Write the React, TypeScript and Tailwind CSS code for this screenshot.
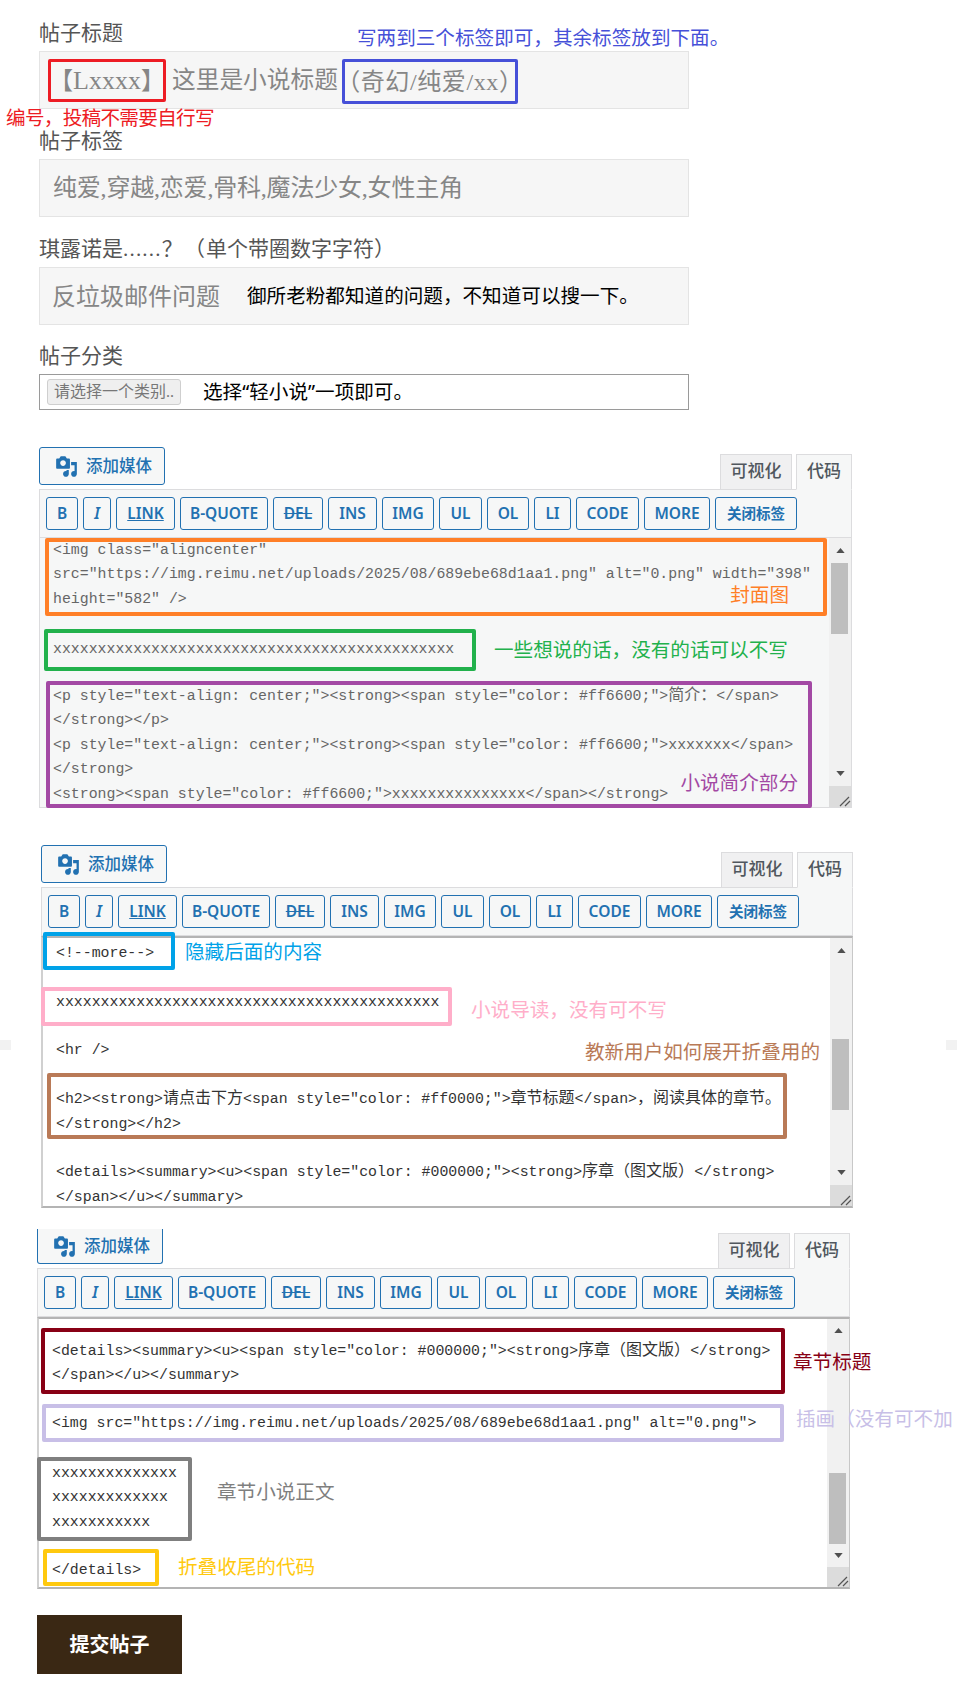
import React from 'react';

const serif = "font-['Liberation_Serif','Noto_Sans_CJK_SC',serif]";
const sans = "font-['Noto_Sans','Noto_Sans_CJK_SC',sans-serif]";

const toolbarButtons = [
  { label: 'B', cls: 'w-[32px] text-[15.5px]' },
  { label: 'I', cls: 'w-[28px] text-[15.5px] italic' },
  { label: 'LINK', cls: 'w-[59px] text-[15.5px] underline' },
  { label: 'B-QUOTE', cls: 'w-[88px] text-[15.5px]' },
  { label: 'DEL', cls: 'w-[50px] text-[15.5px] line-through' },
  { label: 'INS', cls: 'w-[49px] text-[15.5px]' },
  { label: 'IMG', cls: 'w-[52px] text-[15.5px]' },
  { label: 'UL', cls: 'w-[43px] text-[15.5px]' },
  { label: 'OL', cls: 'w-[42px] text-[15.5px]' },
  { label: 'LI', cls: 'w-[37px] text-[15.5px]' },
  { label: 'CODE', cls: 'w-[63px] text-[15.5px]' },
  { label: 'MORE', cls: 'w-[66px] text-[15.5px]' },
  { label: '关闭标签', cls: 'w-[82px] text-[14.5px]' },
];

// CJK runs sit a little larger than the monospace latin in the source
const Code = ({ text }: { text: string }) => (
  <div className="h-[24.4px] leading-[24.4px] whitespace-pre">
    {text.split(/([\u3000-\u9fff\uff00-\uffef]+)/).map((part, i) =>
      i % 2 === 1 ? (
        <span key={i} className="text-[16px]">{part}</span>
      ) : (
        part
      )
    )}
  </div>
);

const MediaIcon = () => (
  <svg viewBox="0 0 20 20" className="w-[23px] h-[23px] fill-[#2271b1]">
    <path
      fillRule="evenodd"
      d="M13 11V4c0-.55-.45-1-1-1h-1.67L9 1H5L3.67 3H2c-.55 0-1 .45-1 1v7c0 .55.45 1 1 1h10c.55 0 1-.45 1-1zM7 4.5c1.38 0 2.5 1.12 2.5 2.5S8.38 9.5 7 9.5 4.5 8.38 4.5 7 5.62 4.5 7 4.5zM14 6h5v10.5c0 1.38-1.12 2.5-2.5 2.5S14 17.88 14 16.5s1.12-2.5 2.5-2.5c.17 0 .34.02.5.05V9h-3V6zm-4 8.05V13h2v3.5c0 1.38-1.12 2.5-2.5 2.5S7 17.88 7 16.5 8.12 14 9.5 14c.17 0 .34.02.5.05z"
    />
  </svg>
);

const Scrollbar = ({ thumb }: { thumb: string }) => (
  <div className="w-[22px] shrink-0 flex flex-col bg-[#f1f1f1]">
    <div className="h-[25px] flex items-center justify-center">
      <svg viewBox="0 0 10 6" className="w-[9px] h-[5px] fill-[#505050]"><path d="M5 0l5 6H0z" /></svg>
    </div>
    <div className="flex-1 px-[2px]">
      <div className={`w-[17px] h-[71px] bg-[#bebebe] ${thumb}`} />
    </div>
    <div className="h-[25px] flex items-center justify-center">
      <svg viewBox="0 0 10 6" className="w-[9px] h-[5px] fill-[#505050]"><path d="M0 0h10L5 6z" /></svg>
    </div>
    <div className="h-[21px] bg-[#dcdcdc] flex items-end justify-end">
      <svg viewBox="0 0 12 12" className="w-[12px] h-[12px] stroke-[#555] stroke-[1.2]">
        <path d="M1 11L10 2M6 11l5-5" />
      </svg>
    </div>
  </div>
);

type EditorProps = {
  boxed?: boolean;
  clippedMedia?: boolean;
  className: string;
  bodyHeight: string;
  thumb: string;
  children: React.ReactNode;
};

const Editor = ({ boxed, clippedMedia, className, bodyHeight, thumb, children }: EditorProps) => (
  <section className={className}>
    <div className={`flex justify-between ${clippedMedia ? 'h-[39px] items-start' : 'h-[42px] items-end'}`}>
      <button
        className={`w-[126px] pl-[3px] flex items-center justify-center gap-[8px] border border-[#2271b1] bg-[#f6f7f7] text-[#2271b1] text-[16.5px] ${sans} ${
          clippedMedia ? 'h-[35px] border-t-0 rounded-b-[3px]' : 'h-[38px] mb-[4px] rounded-[3px]'
        }`}
      >
        <MediaIcon />
        <span className="font-medium">添加媒体</span>
      </button>
      <div className={`flex gap-[4px] self-end relative z-10 -mb-px ${sans} text-[17px] font-medium text-[#50575e]`}>
        <div className="w-[72px] h-[36px] pb-[2px] flex items-center justify-center bg-[#f0f0f1] border border-[#dcdcde]">可视化</div>
        <div className="w-[56px] h-[36px] pb-[2px] flex items-center justify-center bg-[#f6f7f7] border border-[#dcdcde] border-b-[#f6f7f7]">代码</div>
      </div>
    </div>
    <div className="h-[49px] bg-[#f6f7f7] border border-[#dcdcde] flex items-start gap-[5px] pl-[6px] pt-[7px]">
      {toolbarButtons.map((b) => (
        <button
          key={b.label}
          className={`h-[33px] shrink-0 border border-[#2271b1] rounded-[3px] bg-[#f6f7f7] text-[#2271b1] font-semibold ${sans} ${b.cls}`}
        >
          {b.label}
        </button>
      ))}
    </div>
    <div
      className={`flex ${bodyHeight} ${
        boxed
          ? 'bg-white border-y-2 border-l-2 border-r border-y-[#b4b4b4] border-l-[#d0d0d0] border-r-[#c8c8c8]'
          : 'bg-[#f6f7f7] border-x border-b border-[#dcdcde]'
      }`}
    >
      <div
        className={`flex-1 min-w-0 relative z-10 font-['Liberation_Mono','Noto_Sans_CJK_SC',monospace] text-[14.87px] ${
          boxed ? 'text-[#333]' : 'text-[#666]'
        }`}
      >
        {children}
      </div>
      <Scrollbar thumb={thumb} />
    </div>
  </section>
);

// 标注用的彩色方框
const Box = ({ className, children }: { className: string; children?: React.ReactNode }) => (
  <div className={`shrink-0 border-[4px] rounded-[2px] ${className}`}>{children}</div>
);

const Note = ({ className, children }: { className: string; children: React.ReactNode }) => (
  <div className={`shrink-0 whitespace-nowrap text-[19.6px] ${sans} ${className}`}>{children}</div>
);

const Label = ({ children }: { children: React.ReactNode }) => (
  <div className={`h-[28px] leading-[28px] mb-[4px] text-[21px] text-[#555] whitespace-nowrap ${serif}`}>{children}</div>
);

const Field = ({ className, children }: { className: string; children: React.ReactNode }) => (
  <div className={`h-[58px] flex bg-[#f6f6f6] border border-[#e4e4e4] text-[24px] text-[#868686] whitespace-nowrap ${serif} ${className}`}>
    {children}
  </div>
);

export default function App() {
  return (
    <div className="relative w-[957px] h-[1700px] overflow-hidden bg-white">
      <div className="pt-[19px]">
        <form className="ml-[39px] w-[650px] flex flex-col gap-[18px]">
          <div>
            <div className="flex items-start h-[32px]">
              <Label>帖子标题</Label>
              <Note className="ml-[234px] mt-[7px] leading-[24.4px] text-[#4650d8]">写两到三个标签即可，其余标签放到下面。</Note>
            </div>
            <Field className="items-start pt-[7px] pl-[8px]">
              <div className="w-[118px] h-[43px] shrink-0 flex items-center justify-center border-[3px] border-[#ed1c24] rounded-[2px]">
                【<span className="text-[26px]">Lxxxx</span>】
              </div>
              <span className="ml-[6px] leading-[43px] text-[23.7px]">这里是小说标题</span>
              <div className="ml-[4px] w-[176px] h-[45px] shrink-0 flex items-center justify-center tracking-[0.6px] border-[3px] border-[#4650d8] rounded-[2px]">
                （奇幻/纯爱/xx）
              </div>
            </Field>
            <Note className="h-[18px] -mb-[18px] -ml-[33px] leading-[18px] tracking-[-0.7px] text-[#ed1c24]">编号，投稿不需要自行写</Note>
          </div>
          <div>
            <Label>帖子标签</Label>
            <Field className="items-center px-[13px] tracking-[-0.2px]">纯爱,穿越,恋爱,骨科,魔法少女,女性主角</Field>
          </div>
          <div>
            <Label>
              琪露诺是<span className="tracking-[1.2px]">......？（</span>单个带圈数字字符）
            </Label>
            <Field className="items-center pl-[12px]">
              <span className={sans}>反垃圾邮件问题</span>
              <Note className="ml-[27px] leading-[24.4px] text-black">御所老粉都知道的问题，不知道可以搜一下。</Note>
            </Field>
          </div>
          <div className="-mt-px">
            <Label>帖子分类</Label>
            <div className="h-[36px] flex items-center pl-[7px] bg-white border border-[#9a9a9a]">
              <div className={`w-[134px] h-[26px] flex items-center justify-center bg-[#efefef] border border-[#cfcfcf] rounded-[3px] text-[16px] text-[#777] whitespace-nowrap ${serif}`}>
                请选择一个类别..
              </div>
              <Note className="ml-[22px] leading-[24.4px] text-black">选择“轻小说”一项即可。</Note>
            </div>
          </div>
        </form>

        <Editor className="ml-[39px] w-[813px] mt-[37px]" bodyHeight="h-[270px]" thumb="mt-0">
          <Box className="ml-[5px] w-[782px] h-[78px] pl-[4px] border-[#ff7f27]">
            <div className="-mt-[4px]">
              <Code text={'<img class="aligncenter"'} />
              <Code text={'src="https://img.reimu.net/uploads/2025/08/689ebe68d1aa1.png" alt="0.png" width="398"'} />
              <div className="flex justify-between items-start pr-[34px]">
                <Code text={'height="582" />'} />
                <Note className="-mt-[4px] leading-[24.4px] text-[#ff7f27]">封面图</Note>
              </div>
            </div>
          </Box>
          <div className="flex items-center mt-[13px] ml-[4px]">
            <Box className="w-[432px] h-[42px] pl-[5px] pt-[4px] border-[#22b14c]">
              <Code text="xxxxxxxxxxxxxxxxxxxxxxxxxxxxxxxxxxxxxxxxxxxxx" />
            </Box>
            <Note className="ml-[18px] leading-[24.4px] text-[#22b14c]">一些想说的话，没有的话可以不写</Note>
          </div>
          <Box className="mt-[10px] ml-[6px] w-[766px] h-[127px] pl-[3px] border-[#a349a4]">
            <div className="-mt-[1px]">
              <Code text={'<p style="text-align: center;"><strong><span style="color: #ff6600;">简介：</span>'} />
              <Code text="</strong></p>" />
              <Code text={'<p style="text-align: center;"><strong><span style="color: #ff6600;">xxxxxxx</span>'} />
              <Code text="</strong>" />
              <div className="flex justify-between items-start pr-[10px]">
                <Code text={'<strong><span style="color: #ff6600;">xxxxxxxxxxxxxxx</span></strong>'} />
                <Note className="-mt-[11px] leading-[24.4px] text-[#a349a4]">小说简介部分</Note>
              </div>
            </div>
          </Box>
        </Editor>

        <Editor className="ml-[41px] w-[812px] mt-[37px]" boxed bodyHeight="h-[272px]" thumb="mt-[76px]">
          <div className="flex items-start -mt-[6px]">
            <Box className="w-[132px] h-[38px] pl-[9px] pt-[5px] border-[#00a2e8]">
              <Code text="<!--more-->" />
            </Box>
            <Note className="ml-[10px] mt-[8px] leading-[24.4px] text-[#00a2e8]">隐藏后面的内容</Note>
          </div>
          <div className="flex items-start mt-[17px] -ml-[2px]">
            <Box className="w-[411px] h-[39px] pl-[11px] border-[#ffaec9]">
              <div className="-mt-px">
                <Code text="xxxxxxxxxxxxxxxxxxxxxxxxxxxxxxxxxxxxxxxxxxx" />
              </div>
            </Box>
            <Note className="ml-[19px] mt-[11px] leading-[24.4px] text-[#ffaec9]">小说导读，没有可不写</Note>
          </div>
          <div className="flex justify-between items-start h-[24.4px] mt-[12px] pl-[13px] pr-[10px]">
            <Code text="<hr />" />
            <Note className="mt-[2px] leading-[24.4px] text-[#b97a57]">教新用户如何展开折叠用的</Note>
          </div>
          <Box className="mt-[11px] ml-[4px] w-[740px] h-[66px] pl-[5px] pt-[10px] border-[#b97a57]">
            <Code text={'<h2><strong>请点击下方<span style="color: #ff0000;">章节标题</span>，阅读具体的章节。'} />
            <Code text="</strong></h2>" />
          </Box>
          <div className="mt-[21px] pl-[13px]">
            <Code text={'<details><summary><u><span style="color: #000000;"><strong>序章（图文版）</strong>'} />
            <Code text="</span></u></summary>" />
          </div>
        </Editor>

        <Editor className="ml-[37px] w-[813px] mt-[21px]" boxed clippedMedia bodyHeight="h-[272px]" thumb="mt-[130px]">
          <div className="flex items-start mt-[9px] ml-[2px]">
            <Box className="w-[744px] h-[66px] pl-[7px] pt-[7px] border-[#880015]">
              <Code text={'<details><summary><u><span style="color: #000000;"><strong>序章（图文版）</strong>'} />
              <Code text="</span></u></summary>" />
            </Box>
            <Note className="ml-[8px] mt-[22px] leading-[24.4px] text-[#880015]">章节标题</Note>
          </div>
          <div className="flex items-start mt-[10px] ml-[3px]">
            <Box className="w-[742px] h-[38px] pl-[6px] pt-[3px] border-[#c8bfe7]">
              <Code text={'<img src="https://img.reimu.net/uploads/2025/08/689ebe68d1aa1.png" alt="0.png">'} />
            </Box>
            <Note className="ml-[12px] mt-[3px] leading-[24.4px] text-[#c8bfe7]">插画（没有可不加</Note>
          </div>
          <div className="flex items-start mt-[15px] -ml-[2px]">
            <Box className="w-[155px] h-[84px] pl-[11px] border-[#7f7f7f]">
              <Code text="xxxxxxxxxxxxxx" />
              <Code text="xxxxxxxxxxxxx" />
              <Code text="xxxxxxxxxxx" />
            </Box>
            <Note className="ml-[25px] mt-[23px] leading-[24.4px] text-[#7f7f7f]">章节小说正文</Note>
          </div>
          <div className="flex items-start mt-[8px] ml-[4px]">
            <Box className="w-[116px] h-[37px] pl-[5px] pt-[5px] border-[#ffc90e]">
              <Code text="</details>" />
            </Box>
            <Note className="ml-[19px] mt-[6px] leading-[24.4px] text-[#ffc90e]">折叠收尾的代码</Note>
          </div>
        </Editor>

        <button className={`ml-[37px] mt-[26px] w-[145px] h-[59px] bg-[#3a2814] text-white text-[20px] font-bold ${sans}`}>
          提交帖子
        </button>
      </div>

      {/* 原图两侧的浅色残块 */}
      <div className="absolute left-0 top-[1040px] w-[11px] h-[10px] bg-[#f2f2f2]" />
      <div className="absolute right-0 top-[1040px] w-[11px] h-[10px] bg-[#f2f2f2]" />
    </div>
  );
}
